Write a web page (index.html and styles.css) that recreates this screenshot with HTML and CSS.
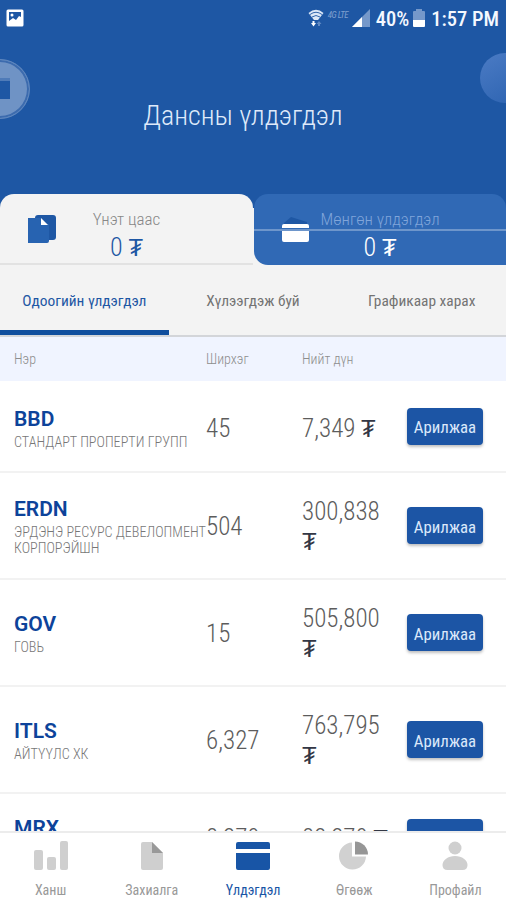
FILE: index.html
```
<!DOCTYPE html>
<html lang="mn">
<head>
  <meta charset="UTF-8">
  <meta name="viewport" content="width=device-width, initial-scale=1.0">
  <title>Дансны үлдэгдэл</title>
  <link rel="stylesheet" href="styles.css">
</head>
<body>
  <div class="app">
    <header class="header">
      <div class="status-bar">
        <svg class="status-image" width="18" height="18" viewBox="0 0 18 18">
          <rect x="0.5" y="0.5" width="17" height="17" rx="1.500" fill="#fff"/>
          <path d="M3 3h12v5l-2-1-3 4-3-2-4 3z" fill="#1e57a4"/>
          <circle cx="6" cy="6" r="1.500" fill="#fff"/>
        </svg>
        <svg width="16" height="18" viewBox="0 0 16 18">
          <path d="M0.500 4Q8-2.500 15.500 4L10 11H6z" fill="#dce8f8"/>
          <path d="M2 5.500Q8 1 14 5.500M4 8Q8 5 12 8" fill="none" stroke="#1e57a4" stroke-width="0.900"/>
          <path d="M4.500 12h2v2h1.500l-2.500 3.500L3 14h1.500z" fill="#fff"/>
          <path d="M10 17h2v-2h1.500L11 12l-2.500 3H10z" fill="#5f88c2"/>
        </svg>
        <span class="status-lte">4G LTE</span>
        <svg class="status-signal" width="18" height="18" viewBox="0 0 18 18">
          <path d="M0 18L18 0v18z" fill="#7598ca"/>
          <path d="M0 18L10 8v10z" fill="#fff"/>
        </svg>
        <span class="status-text status-percent">40%</span>
        <svg class="status-battery" width="12" height="18" viewBox="0 0 12 18">
          <path d="M3 0h6v2h2a1 1 0 0 1 1 1v8H0V3a1 1 0 0 1 1-1h2z" fill="#7598ca"/>
          <path d="M0 11h12v6a1 1 0 0 1-1 1H1a1 1 0 0 1-1-1z" fill="#fff"/>
        </svg>
        <span class="status-text status-time">1:57 PM</span>
      </div>
      <div class="bubble bubble-left"><span class="bubble-card"></span></div>
      <div class="bubble bubble-right"></div>
      <h1 class="title">Дансны үлдэгдэл</h1>
    </header>

    <!-- Account switch -->
    <div class="accounts">
      <div class="account account-active">
        <svg class="account-icon" width="30" height="30" viewBox="0 0 30 30">
          <rect x="8" y="1" width="21" height="25" rx="3" fill="#1e57a4"/>
          <path d="M1 4h13v6h8v17a2 2 0 0 1-2 2H1z" fill="#2763b1"/>
          <path d="M14 4l7 7h-7z" fill="#fff"/>
        </svg>
        <span class="account-name">Үнэт цаас</span>
        <span class="account-value">0 <i>₮</i></span>
      </div>
      <div class="account account-cash">
        <svg class="account-icon" width="30" height="30" viewBox="0 0 30 30">
          <path d="M3 9L10 3l16 5v4H3z" fill="#1e57a4"/>
          <path d="M1 14v-2a2 2 0 0 1 2-2h23a2 2 0 0 1 2 2v2zM1 17h27v9a2 2 0 0 1-2 2H3a2 2 0 0 1-2-2z" fill="#fff"/>
        </svg>
        <span class="account-name">Мөнгөн үлдэгдэл</span>
        <span class="account-value">0 <i>₮</i></span>
      </div>
    </div>

    <div class="tabs">
      <div class="tab tab-active">Одоогийн үлдэгдэл</div>
      <div class="tab">Хүлээгдэж буй</div>
      <div class="tab">Графикаар харах</div>
    </div>

    <!-- Holdings -->
    <div class="row table-head">
      <span>Нэр</span><span>Ширхэг</span><span>Нийт дүн</span>
    </div>
    <div class="list">
      <div class="row row-short row-first">
        <div class="stock"><b>BBD</b><small>СТАНДАРТ ПРОПЕРТИ ГРУПП</small></div>
        <span class="number">45</span>
        <span class="number">7,349 <i>₮</i></span>
        <button class="trade">Арилжаа</button>
      </div>
      <div class="row">
        <div class="stock"><b>ERDN</b><small>ЭРДЭНЭ РЕСУРС ДЕВЕЛОПМЕНТ<br>КОРПОРЭЙШН</small></div>
        <span class="number">504</span>
        <span class="number">300,838<br><i>₮</i></span>
        <button class="trade">Арилжаа</button>
      </div>
      <div class="row">
        <div class="stock"><b>GOV</b><small>ГОВЬ</small></div>
        <span class="number">15</span>
        <span class="number">505,800<br><i>₮</i></span>
        <button class="trade">Арилжаа</button>
      </div>
      <div class="row">
        <div class="stock"><b>ITLS</b><small>АЙТҮҮЛС ХК</small></div>
        <span class="number">6,327</span>
        <span class="number">763,795<br><i>₮</i></span>
        <button class="trade">Арилжаа</button>
      </div>
      <div class="row row-short row-last">
        <div class="stock"><b>MRX</b></div>
        <span class="number">8,270</span>
        <span class="number">82,270 <i>₮</i></span>
        <button class="trade"></button>
      </div>
    </div>

    <nav class="nav">
      <div class="nav-item">
        <svg width="36" height="30" viewBox="0 0 36 30" fill="#cfcfcf">
          <rect x="1" y="9" width="9" height="20" rx="2"/>
          <rect x="14" y="16" width="9" height="13" rx="2"/>
          <rect x="27" y="0" width="8" height="29" rx="2"/>
        </svg>
        <span>Ханш</span>
      </div>
      <div class="nav-item">
        <svg width="36" height="30" viewBox="0 0 36 30">
          <path d="M9 1h9l11 11v15a2 2 0 0 1-2 2H9a2 2 0 0 1-2-2V3a2 2 0 0 1 2-2z" fill="#cfcfcf"/>
          <path d="M18 1l11 11H18z" fill="#999"/>
        </svg>
        <span>Захиалга</span>
      </div>
      <div class="nav-item nav-active">
        <svg width="36" height="30" viewBox="0 0 36 30" fill="#1855a6">
          <path d="M1 8V3a2 2 0 0 1 2-2h30a2 2 0 0 1 2 2v5zM1 12h34v15a2 2 0 0 1-2 2H3a2 2 0 0 1-2-2z"/>
        </svg>
        <span>Үлдэгдэл</span>
      </div>
      <div class="nav-item">
        <svg width="36" height="30" viewBox="0 0 36 30">
          <path d="M16 1.500v14h14A13.500 13.500 0 1 1 16 1.500z" fill="#d1d1d1"/>
          <path d="M19 0.500a13 13 0 0 1 13 13H19z" fill="#969696"/>
        </svg>
        <span>Өгөөж</span>
      </div>
      <div class="nav-item">
        <svg width="36" height="30" viewBox="0 0 36 30" fill="#cfcfcf">
          <circle cx="18" cy="7" r="6.500"/>
          <path d="M5.500 24C5.500 19 11 15 18 15s12.500 4 12.500 9q0 5-5 5h-15q-5 0-5-5z"/>
        </svg>
        <span>Профайл</span>
      </div>
    </nav>
  </div>
</body>
</html>
```
FILE: styles.css
```
* {
  box-sizing: border-box;
}

body {
  margin: 0;
  background: #fff;
  font-family: "Roboto Condensed", Roboto, sans-serif;
  font-stretch: 75%;
}

.app {
  position: relative;
  display: flex;
  flex-direction: column;
  height: 900px;
  width: 506px;
  overflow: hidden;
}

.header {
  flex: none;
  height: 194px;
  background: #1e57a4;
  color: #dfeafa;
}

.status-bar {
  display: flex;
  align-items: center;
  height: 36px;
  padding: 0 7px 0 6px;
}

.status-image {
  margin-right: auto;
}

.status-lte {
  width: 20px;
  margin: -6px 4px 0 4px;
  font-size: 9px;
  letter-spacing: -0.5px;
  font-style: italic;
  white-space: nowrap;
  color: #7f9fcf;
}

.status-text {
  font-size: 20.5px;
  line-height: 24px;
  margin-top: 2px;
  font-weight: 500;
  color: #f4f8ff;
  white-space: nowrap;
}

.status-percent {
  margin-left: 6px;
  margin-right: 4px;
}

.status-time {
  margin-left: 6px;
}

.title {
  margin: 63px 0 0;
  padding-right: 20px;
  text-align: center;
  font-size: 28px;
  line-height: 34px;
  font-weight: 300;
}

/* Circles cut off by the screen edges */
.bubble {
  position: absolute;
  border-radius: 50%;
}

.bubble-left {
  left: -30px;
  top: 59px;
  width: 60px;
  height: 60px;
  background: #6f93c5;
  border: 1px solid #5d86be;
  box-shadow: inset 0 0 0 2px #3c6bae;
}

.bubble-card {
  position: absolute;
  left: 19px;
  top: 18px;
  width: 20px;
  height: 21px;
  background: #1e57a4;
  border-top: 3px solid #4f7bb8;
}

.bubble-right {
  left: 480px;
  top: 53px;
  width: 50px;
  height: 50px;
  background: linear-gradient(150deg, #4b7bc4, #2b62b0);
}

.accounts {
  display: flex;
  flex: none;
  height: 71px;
  background: linear-gradient(#1e57a4 20%, #f3f3f3 20%);
}

.account {
  display: grid;
  grid-template-columns: 58px 1fr;
  grid-template-rows: 25px 28px;
  width: 253px;
  padding-top: 14px;
  border-radius: 14px 14px 0 0;
}

.account-active {
  background: #f3f3f3;
  border-bottom: 2px solid #e2e2e2;
  color: #1e57a4;
}

.account-cash {
  position: relative;
  margin-left: 1px;
  width: 252px;
  background: #3069b5;
  border-radius: 14px 14px 0 14px;
  color: #fff;
}

.account-cash::after {
  content: "";
  position: absolute;
  left: 0;
  right: 0;
  top: 35px;
  height: 2px;
  background: rgba(255, 255, 255, 0.3);
}

.account-icon {
  grid-area: 1 / 1 / 3 / 2;
  margin: 6px 0 0 27px;
}

.account-name,
.account-value {
  grid-column: 1 / 3;
  justify-self: center;
  white-space: nowrap;
}

.account-name {
  grid-row: 1;
  font-size: 17px;
  line-height: 22px;
  font-weight: 300;
  color: #888;
}

.account-cash .account-name {
  color: #80a5da;
}

.account-value {
  grid-row: 2;
  font-size: 26px;
  line-height: 29px;
  font-weight: 300;
}

.account-value i {
  font-size: 24px;
  font-style: normal;
  font-weight: 400;
}

.tabs {
  display: flex;
  flex: none;
  height: 72px;
  background: #f3f3f3;
  border-bottom: 2px solid #d3d5d9;
  color: #737373;
}

.tab {
  flex: 1;
  height: 70px;
  line-height: 73px;
  text-align: center;
  font-size: 15.4px;
  white-space: nowrap;
}

.tab-active {
  border-bottom: 5px solid #0f4e9e;
  color: #1e57a4;
}

.row {
  display: grid;
  grid-template-columns: 192px 96px 105px 76px;
  align-items: center;
  height: 107px;
  padding-left: 14px;
  border-bottom: 2px solid #f2f2f2;
}

.row-short {
  height: 92px;
}

.row-last {
  height: 88px;
}

.table-head {
  flex: none;
  height: 44px;
  border: 0;
  background: #f0f4ff;
  color: #8d8d8d;
  font-size: 14px;
  font-weight: 300;
}

.list {
  flex: 1;
  min-height: 0;
  overflow: hidden;
}

.stock b {
  display: block;
  font-family: Roboto, sans-serif;
  font-stretch: 100%;
  font-size: 21px;
  line-height: 28px;
  font-weight: 600;
  color: #0d439a;
}

.stock small {
  display: block;
  margin-top: 1px;
  font-size: 14.2px;
  line-height: 16px;
  font-weight: 300;
  color: #777;
  white-space: nowrap;
}

.row-first .stock {
  padding-top: 3px;
}

.row-last .stock {
  padding-bottom: 18px;
}

.number {
  padding-top: 3px;
  font-size: 25px;
  line-height: 30px;
  font-weight: 300;
  color: #5c5c5c;
}

.row-first .number {
  padding-top: 6px;
}

.number i {
  font-size: 24px;
  line-height: 28px;
  font-style: normal;
  font-weight: 400;
  color: #333745;
}

.trade {
  height: 37px;
  padding: 2px 0 0;
  border: 0;
  border-radius: 4px;
  background: #1c55a5;
  box-shadow: 0 2px 3px rgba(0, 0, 0, 0.25);
  color: #dbe8fa;
  font: inherit;
  font-size: 16.8px;
}

.nav {
  display: flex;
  flex: none;
  height: 69px;
  border-top: 2px solid #ececec;
  background: #fff;
}

.nav-item {
  display: flex;
  flex: 1;
  flex-direction: column;
  align-items: center;
  padding-top: 8px;
  font-size: 14px;
  line-height: 18px;
  color: #999;
}

.nav-item span {
  margin-top: 10px;
}

.nav-active {
  color: #1855a6;
}
```
